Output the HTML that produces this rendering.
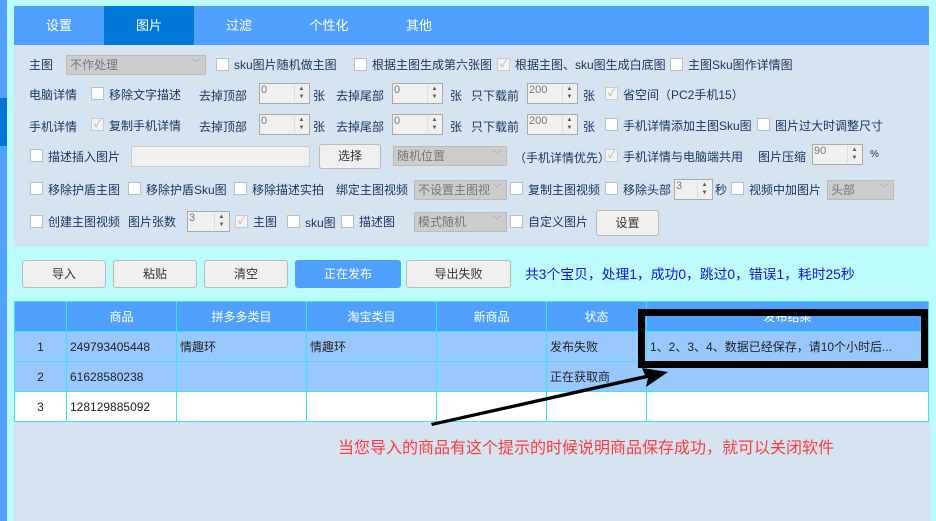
<!DOCTYPE html>
<html><head><meta charset="utf-8"><style>
*{margin:0;padding:0;box-sizing:border-box}
body{width:936px;height:521px;background:#bdfcfc;position:relative;overflow:hidden;font-family:"Liberation Sans","Noto Sans CJK SC",sans-serif;font-size:12px;color:#1c3560}
.a{position:absolute;white-space:nowrap}
.cb{position:absolute;width:13px;height:13px;background:#fff;border:1px solid #b8c0c8}
.ck{position:absolute;width:13px;height:13px;background:#f4f4f4;border:1px solid #c8ccd0;color:#aaa;font-size:10px;line-height:11px;text-align:center}
.sel{position:absolute;height:20px;background:#cccccc;border:1px solid #bbb;color:#777;font-size:12px;line-height:18px;padding-left:3px}
.sel:after{content:"﹀";position:absolute;right:4px;top:0;color:#aaa;font-size:10px}
.sp{position:absolute;height:21px;background:#f0f0f0;border:1px solid #aaa;color:#777;font-size:11px;line-height:13px;padding-left:1px}
.sp i{position:absolute;right:1px;top:1px;width:14px;height:17px;border-left:1px solid #ddd;font-style:normal;font-size:6px;line-height:8px;text-align:center;color:#555}
.btn{position:absolute;height:28px;background:#f0f0f0;border:1px solid #bbb;border-radius:3px;text-align:center;line-height:26px;color:#333}
.tab{position:absolute;top:6px;height:39px;width:90px;line-height:39px;text-align:center;color:#fff;font-size:13px}
td{border:1px solid #33e8f0;text-align:center;height:30px;padding:0 3px;white-space:nowrap}
</style></head><body>
<div class="a" style="left:0;top:0;width:7px;height:521px;background:#4fa0ff"></div>
<div class="a" style="left:0;top:98px;width:7px;height:48px;background:#0078d7"></div>
<div class="a" style="left:14px;top:6px;width:915px;height:39px;background:#4fa0ff"></div>
<div class="tab" style="left:14px">设置</div>
<div class="tab" style="left:104px;background:#0078d7">图片</div>
<div class="tab" style="left:194px">过滤</div>
<div class="tab" style="left:284px">个性化</div>
<div class="tab" style="left:374px">其他</div>
<div class="a" style="left:14px;top:45px;width:915px;height:202px;background:#d6e4f2"></div>

<div class="a" style="left:29px;top:56px">主图</div>
<div class="sel" style="left:66px;top:55px;width:140px">不作处理</div>
<div class="cb" style="left:216px;top:58px"></div><div class="a" style="left:234px;top:56px">sku图片随机做主图</div>
<div class="cb" style="left:354px;top:58px"></div><div class="a" style="left:372px;top:56px">根据主图生成第六张图</div>
<div class="ck" style="left:497px;top:58px">✓</div><div class="a" style="left:515px;top:56px">根据主图、sku图生成白底图</div>
<div class="cb" style="left:670px;top:58px"></div><div class="a" style="left:688px;top:56px">主图Sku图作详情图</div>

<div class="a" style="left:29px;top:86px">电脑详情</div>
<div class="cb" style="left:91px;top:87px"></div><div class="a" style="left:109px;top:86px">移除文字描述</div>
<div class="a" style="left:199px;top:87px">去掉顶部</div>
<div class="sp" style="left:259px;top:83px;width:51px">0<i>▲<br>▼</i></div><div class="a" style="left:313px;top:87px">张</div>
<div class="a" style="left:336px;top:87px">去掉尾部</div>
<div class="sp" style="left:392px;top:83px;width:51px">0<i>▲<br>▼</i></div><div class="a" style="left:450px;top:87px">张</div>
<div class="a" style="left:471px;top:87px">只下载前</div>
<div class="sp" style="left:527px;top:83px;width:51px">200<i>▲<br>▼</i></div><div class="a" style="left:583px;top:87px">张</div>
<div class="ck" style="left:605px;top:87px">✓</div><div class="a" style="left:623px;top:86px">省空间（PC2手机15）</div>

<div class="a" style="left:29px;top:118px">手机详情</div>
<div class="ck" style="left:91px;top:118px">✓</div><div class="a" style="left:109px;top:117px">复制手机详情</div>
<div class="a" style="left:199px;top:118px">去掉顶部</div>
<div class="sp" style="left:259px;top:114px;width:51px">0<i>▲<br>▼</i></div><div class="a" style="left:313px;top:118px">张</div>
<div class="a" style="left:336px;top:118px">去掉尾部</div>
<div class="sp" style="left:392px;top:114px;width:51px">0<i>▲<br>▼</i></div><div class="a" style="left:450px;top:118px">张</div>
<div class="a" style="left:471px;top:118px">只下载前</div>
<div class="sp" style="left:527px;top:114px;width:51px">200<i>▲<br>▼</i></div><div class="a" style="left:583px;top:118px">张</div>
<div class="cb" style="left:605px;top:118px"></div><div class="a" style="left:623px;top:117px">手机详情添加主图Sku图</div>
<div class="cb" style="left:757px;top:118px"></div><div class="a" style="left:775px;top:117px">图片过大时调整尺寸</div>

<div class="cb" style="left:30px;top:149px"></div><div class="a" style="left:48px;top:148px">描述插入图片</div>
<div class="a" style="left:131px;top:146px;width:179px;height:21px;background:#f0f0f0;border:1px solid #ccc"></div>
<div class="btn" style="left:319px;top:144px;width:62px;height:25px;line-height:23px">选择</div>
<div class="sel" style="left:393px;top:146px;width:114px">随机位置</div>
<div class="a" style="left:514px;top:149px">（手机详情优先）</div>
<div class="ck" style="left:605px;top:149px">✓</div><div class="a" style="left:623px;top:148px">手机详情与电脑端共用</div>
<div class="a" style="left:758px;top:148px">图片压缩</div>
<div class="sp" style="left:812px;top:144px;width:51px">90<i>▲<br>▼</i></div><div class="a" style="left:870px;top:149px;font-size:10px">%</div>

<div class="cb" style="left:30px;top:182px"></div><div class="a" style="left:48px;top:181px">移除护盾主图</div>
<div class="cb" style="left:128px;top:182px"></div><div class="a" style="left:146px;top:181px">移除护盾Sku图</div>
<div class="cb" style="left:234px;top:182px"></div><div class="a" style="left:252px;top:181px">移除描述实拍</div>
<div class="a" style="left:336px;top:181px">绑定主图视频</div>
<div class="sel" style="left:414px;top:180px;width:93px">不设置主图视</div>
<div class="cb" style="left:510px;top:182px"></div><div class="a" style="left:528px;top:181px">复制主图视频</div>
<div class="cb" style="left:605px;top:182px"></div><div class="a" style="left:623px;top:181px">移除头部</div>
<div class="sp" style="left:674px;top:179px;width:39px">3<i>▲<br>▼</i></div><div class="a" style="left:715px;top:181px">秒</div>
<div class="cb" style="left:731px;top:182px"></div><div class="a" style="left:749px;top:181px">视频中加图片</div>
<div class="sel" style="left:827px;top:180px;width:67px">头部</div>

<div class="cb" style="left:30px;top:215px"></div><div class="a" style="left:48px;top:213px">创建主图视频</div>
<div class="a" style="left:128px;top:213px">图片张数</div>
<div class="sp" style="left:187px;top:211px;width:43px">3<i>▲<br>▼</i></div>
<div class="ck" style="left:235px;top:215px">✓</div><div class="a" style="left:253px;top:213px">主图</div>
<div class="cb" style="left:287px;top:215px"></div><div class="a" style="left:305px;top:214px">sku图</div>
<div class="cb" style="left:341px;top:215px"></div><div class="a" style="left:359px;top:213px">描述图</div>
<div class="sel" style="left:414px;top:212px;width:93px">模式随机</div>
<div class="cb" style="left:510px;top:215px"></div><div class="a" style="left:528px;top:213px">自定义图片</div>
<div class="btn" style="left:596px;top:210px;width:63px;height:26px;line-height:24px">设置</div>

<div class="btn" style="left:22px;top:260px;width:84px">导入</div>
<div class="btn" style="left:113px;top:260px;width:84px">粘贴</div>
<div class="btn" style="left:204px;top:260px;width:84px">清空</div>
<div class="btn" style="left:295px;top:260px;width:106px;background:#4fa0ff;border-color:#4fa0ff;color:#fff">正在发布</div>
<div class="btn" style="left:406px;top:260px;width:105px">导出失败</div>
<div class="a" style="left:525px;top:263px;color:#1414e0;font-size:13.8px">共3个宝贝，处理1，成功0，跳过0，错误1，耗时25秒</div>

<div class="a" style="left:14px;top:301px;width:916px;height:220px;background:#d6e4f2"></div>
<table class="a" style="left:14px;top:301px;width:915px;border-collapse:collapse;table-layout:fixed">
<colgroup><col style="width:52px"><col style="width:110px"><col style="width:130px"><col style="width:130px"><col style="width:110px"><col style="width:100px"><col></colgroup>
<tr style="background:#4fa0ff;color:#fff"><td>&nbsp;</td><td>商品</td><td>拼多多类目</td><td>淘宝类目</td><td>新商品</td><td>状态</td><td>发布结果</td></tr>
<tr style="background:#99c8ff;color:#222"><td>1</td><td style="text-align:left">249793405448</td><td style="text-align:left">情趣环</td><td style="text-align:left">情趣环</td><td></td><td style="text-align:left">发布失败</td><td style="text-align:left">1、2、3、4、数据已经保存，请10个小时后...</td></tr>
<tr style="background:#99c8ff;color:#222"><td>2</td><td style="text-align:left">61628580238</td><td></td><td></td><td></td><td style="text-align:left">正在获取商</td><td></td></tr>
<tr style="background:#fff;color:#222"><td>3</td><td style="text-align:left">128129885092</td><td></td><td></td><td></td><td></td><td></td></tr>
</table>
<div class="a" style="left:638px;top:309px;width:290px;height:59px;border:7px solid #000"></div>
<svg class="a" style="left:0;top:0" width="936" height="521"><path d="M432 426 L648 378 L646 387 L668 372 L642 368 L645 375 L431 423 Z" fill="#000"/></svg>
<div class="a" style="left:338px;top:434px;color:#ff3a3a;font-size:16px">当您导入的商品有这个提示的时候说明商品保存成功，就可以关闭软件</div>
</body></html>
